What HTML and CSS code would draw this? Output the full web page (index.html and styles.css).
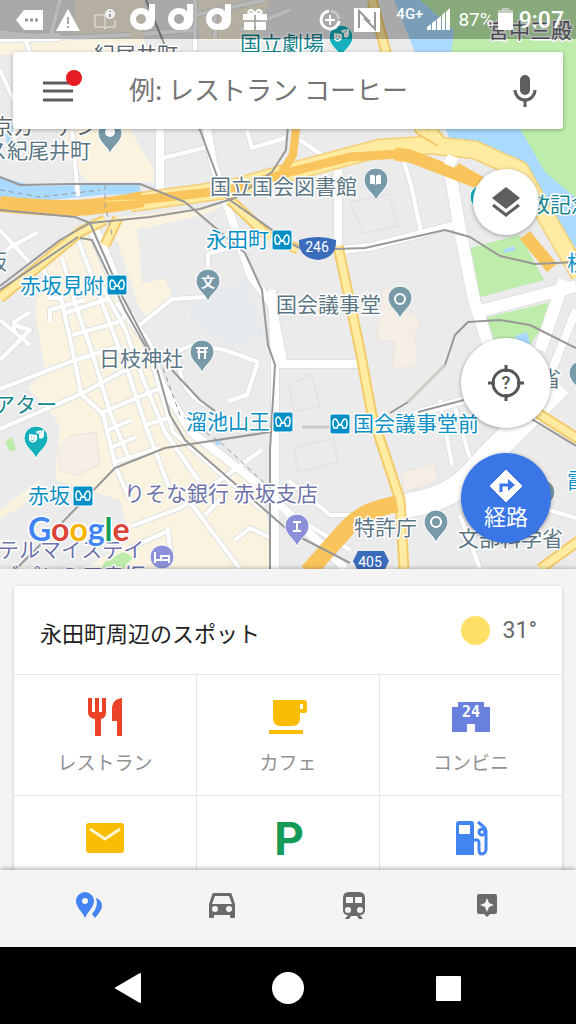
FILE: index.html
```html
<!DOCTYPE html>
<html lang="ja">
<head>
    <meta charset="UTF-8">
    <meta name="viewport" content="width=device-width, initial-scale=1.0">
    <title>永田町周辺のスポット</title>
    <link rel="stylesheet" href="styles.css">
</head>
<body>
<div class="screen">

    <main class="map">
        <svg class="map-canvas" viewBox="0 0 576 569" preserveAspectRatio="xMidYMin slice">
            <defs>
                <path id="pin" d="M0 18C-2 10-12 6-12-3A12 12 0 1 1 12-3C12 6 2 10 0 18z"/>
                <g id="metro">
                    <rect x="-10" y="-10" width="20" height="20" rx="2" fill="#0090c5" stroke="#fff" stroke-width="1"/>
                    <path d="M-2 4H-6C-8 0-7-5-5-5-2-5-2 1 0 1S2-5 5-5C7-5 8 0 6 4H2M-2 4Q-4 1 0 1 4 1 2 4" fill="none" stroke="#fff" stroke-width="1.5"/>
                </g>
                <g id="masks" fill="#fff">
                    <path d="M-7-4l8 1v4c-1 5-8 4-8 0z"/>
                    <path d="M1-7l7-1v5c0 4-3 4-5 3v-4l-3-1z"/>
                    <path d="M-5-1h1M-2 0h1M3-5h1M5-6h1M-5 2q2 1 3 0" stroke="#17a9b5"/>
                </g>
                <path id="narrow" d="M24 36L44 92M72 130L78 196M163 158L212 146M208 268V254L242 244M140 325L172 299 206 297M0 230L30 263M6 250L38 232M0 360L30 330 14 325M14 330V322L30 312M48 298L61 298 75 362 81 394 103 414 116 468M42 268L62 300M62 258L79 315 92 352 110 412 129 459M78 240L101 300 127 369 147 429 170 490M101 285L125 329 143 379 165 432 205 490M110 285L138 325 154 369 173 432 262 510M50 322V310L84 300M66 313L110 298M72 335L119 322M0 389L75 360 118 347M0 429L81 394 127 369M103 412L158 389M108 430L131 420M112 447L136 437M115 462L160 448M122 318L134 314M128 365L152 358M145 425L168 418M30 345L0 320M116 468L130 500M132 526L180 508 192 500 262 450M190 502L240 569M205 515L228 492M235 540L250 528 275 540M167 527L172 560M130 548L170 530M182 380L176 352 192 345 225 350 258 362M258 362L247 395 228 401M182 380Q190 398 205 405M288 480L330 515 355 515M300 520L350 550M440 400L452 465M455 408L470 458M515 500L576 518M480 569L460 515M404 162L411 185 421 232M300 140L326 158 290 170M0 70L18 110 13 150M247 130L252 148 285 138M195 0V50M60 0L50 38 0 32M50 38L130 35M143 34L195 30M195 15L265 0M240 30L290 10M215 10V38"/>
                <path id="medium" d="M160 122V190M206 122L213 163 233 223 250 275 272 305 283 360M272 290L275 364V569M278 364H366M338 170V246M340 250L370 247 455 225M118 302L147 342 162 385 191 432 257 483 323 546 345 569M415 414L465 400M0 38L60 37M540 400L576 310M30 80L95 85"/>
                <path id="wide" d="M448 160L460 230 474 300 490 350M480 311L576 286M564 280L540 350M92 226L122 298"/>
                <path id="boulevard" d="M405 506C470 496 475 465 500 445L560 385"/>
                <path id="yellow" d="M372 0L386 52 420 130 440 142M338 246L360 350 372 415 400 500 404 569M0 298L80 232 105 220M230 200L270 238M288 245L298 249M530 408L580 440M540 569L580 540M425 120L440 140M105 245L118 218"/>
            </defs>

            <rect width="576" height="569" fill="#ebebec"/>

            <!-- built-up areas -->
            <g fill="#faf3df">
                <path d="M0 40H130L134 55H0zM70 125H128L154 170V182H88L60 150z"/>
                <path d="M45 270L90 230 125 310 150 350 182 420 260 480 275 569H85L130 540 120 500 55 480 60 425 40 400 28 388 45 372 35 310z"/>
                <path d="M112 226l25-2 5 60 22-6 8 18-22 26-12-18z"/>
                <path d="M110 218L225 205 200 216 125 232z"/>
                <path d="M0 510L40 480 30 500 0 520z"/>
                <path d="M195 0h75l-15 40h-55zM75 0h70v45H75z"/>
            </g>
            <path d="M185 300L248 280 265 340 225 345 190 320z" fill="#e7eaed"/>
            <g fill="none" stroke="#dfdfe0">
                <path d="M350 202l39-8 9 32-35 7zM289 386l22-12 9 32-26 6zM294 448l39-10 5 24-40 10zM345 150l48-2"/>
            </g>
            <g fill="#f4eee7" stroke="#eae4de">
                <path d="M383 288l22 2 2 23 12 3 1 15-6 4 5 30-27 5 3-28-18-2 2-20z"/>
                <path d="M402 472l33-8 3 17-34 12zM58 448l12-12 26-4 4 32-22 12-18-6z"/>
            </g>

            <!-- parks and water -->
            <path d="M413 0H576V260L520 190 475 110z" fill="#bdecab"/>
            <path d="M394 0H420L454 30 451 55 522 132 545 172 576 198V260L545 230 505 175 450 140 414 50z" fill="#aadaff"/>
            <path d="M470 248L520 235 544 280 480 297z" fill="#bdecab"/>
            <path d="M484 318L560 300 520 360 490 350zM5 442l7-5 4 12-6 3zM105 562l18-10 10 5-10 12h-22z" fill="#bdecab"/>
            <path d="M503 250l10-4 3 4-12 3zM515 336l12-4 3 12-12 2zM215 442a3 3 0 1 0 6 0 3 3 0 1 0-6 0M5 128l8-3 5 20-10 6z" fill="#aadaff"/>
            <path d="M0 177L35 186 140 184V194L100 195 40 201 0 198z" fill="#aadaff"/>

            <!-- streets, casing first -->
            <g class="casing">
                <use href="#narrow" stroke-width="6"/>
                <use href="#medium" stroke-width="10"/>
                <use href="#wide" stroke-width="14"/>
                <use href="#boulevard" stroke-width="26"/>
            </g>
            <g class="street">
                <use href="#narrow" stroke-width="4"/>
                <use href="#medium" stroke-width="8"/>
                <use href="#wide" stroke-width="12"/>
                <use href="#boulevard" stroke-width="24"/>
            </g>

            <!-- highways -->
            <g class="highway">
                <path d="M130 203L230 189 290 172 380 148 430 145 475 150 520 170 545 215 580 275" stroke="#f5cf77" stroke-width="19"/>
                <path d="M130 203L230 189 290 172 380 148 430 145 475 150 520 170 545 215 580 275" stroke="#ffeba1" stroke-width="16"/>
                <use href="#yellow" stroke="#f3cb6c" stroke-width="11"/>
                <use href="#yellow" stroke="#ffeba1" stroke-width="7"/>
                <path d="M0 204Q60 210 90 207T143 199" stroke="#fac45c" stroke-width="16"/>
                <path d="M130 201L230 190 290 172 350 157 400 154" stroke="#fac45c" stroke-width="9"/>
                <path d="M395 154L410 156 475 181M525 235L552 268" stroke="#fac45c" stroke-width="13"/>
                <path d="M455 169L480 183" stroke="#fac45c" stroke-width="14"/>
                <path d="M446 159L456 163" stroke="#fff" stroke-width="10"/>
                <path d="M282 172L293 155 297 120" stroke="#fac45c" stroke-width="8"/>
                <path d="M308 572L348 527C360 514 376 508 397 504" stroke="#fac45c" stroke-width="17"/>
                <path d="M106 201L135 200" stroke="#ffe58c" stroke-width="1"/>
            </g>

            <!-- railways -->
            <g class="rail">
                <path d="M0 177L20 185 70 184 140 184 185 202 245 253 262 290 268 345 275 365 270 450V569"/>
                <path d="M0 210L75 217 90 223 150 217 200 209 235 198 272 172 286 150 288 125"/>
                <path d="M146 0L200 130 224 195 230 200 275 232"/>
                <path d="M90 223L120 292 150 350M80 238L92 240 125 310 156 365 170 415 185 440 290 532 350 563"/>
                <path d="M0 290L78 237M0 286L60 240 90 223"/>
                <path d="M0 585L50 535 115 468 165 448 270 432"/>
                <path d="M172 370L200 400 215 411"/>
                <path d="M288 242L300 248 335 249 365 248 445 230 470 237 500 256 535 264 576 262"/>
                <path d="M390 413L408 402M445 365L455 335 468 322 500 320 530 325 576 348M418 412L464 400M530 418L576 446"/>
                <path d="M408 402L445 365M302 427H340" stroke="#d0ccc5" stroke-width="3"/>
                <path d="M105 185V205L112 235M0 190L40 197 100 190" stroke-width="1" stroke-dasharray="5 4"/>
                <path d="M160 360L180 415 220 442 272 490" stroke-width="1" stroke-dasharray="5 4"/>
            </g>

            <!-- place pins -->
            <g stroke="#fff" stroke-width="1">
                <g fill="#7799a8">
                    <use href="#pin" x="110" y="136"/>
                    <use href="#pin" x="208" y="284"/>
                    <use href="#pin" x="376" y="183"/>
                    <use href="#pin" x="400" y="301"/>
                    <use href="#pin" x="202" y="355"/>
                    <use href="#pin" x="436" y="525"/>
                    <use href="#pin" x="581" y="376"/>
                    <use href="#pin" x="543" y="495"/>
                </g>
                <g fill="#16b0bd">
                    <use href="#pin" x="36" y="441"/>
                    <use href="#pin" x="341" y="40"/>
                    <use href="#pin" x="482" y="200"/>
                </g>
                <g fill="#8c90d8">
                    <use href="#pin" x="297" y="529"/>
                    <circle cx="162" cy="557" r="12"/>
                </g>
            </g>
            <use href="#masks" x="36" y="438"/>
            <use href="#masks" x="341" y="37"/>
            <circle cx="110" cy="132" r="5" fill="#fff"/>
            <g fill="none" stroke="#fff" stroke-width="2">
                <circle cx="400" cy="299" r="5"/>
                <circle cx="436" cy="522" r="5"/>
                <path d="M196 348h12M197 352h10M199 348v11M205 348v11"/>
                <path d="M155 552v11M155 560h14v3M169 560v-4h-8v4"/>
                <path d="M293 522h8M293 531h8M297 522v9"/>
            </g>
            <path d="M370 175q3-1 5 1v9q-2-2-5-1zM381 175q-3-1-5 1v9q2-2 5-1z" fill="#fff"/>

            <!-- station marks -->
            <use href="#metro" x="282" y="240"/>
            <use href="#metro" x="117" y="285"/>
            <use href="#metro" x="283" y="422"/>
            <use href="#metro" x="340" y="424"/>
            <use href="#metro" x="83" y="496"/>

            <!-- road numbers -->
            <path d="M299 240q19-6 37 0 1 18-18 20-20-2-19-20z" fill="#3a6cbc"/>
            <path d="M358 551h26l5 10-5 10h-26l-5-10z" fill="#3a6cbc"/>
            <text class="route-no" x="317" y="252">246</text>
            <text class="route-no" x="370" y="567">405</text>

            <!-- labels -->
            <g class="label">
                <text x="94" y="62" class="dark">紀尾井町</text>
                <text x="240" y="51" class="culture">国立劇場</text>
                <text x="488" y="38" class="dark">宮中三殿</text>
                <text x="-8" y="134" class="dark">京ガーデン</text>
                <text x="-14" y="158">ス紀尾井町</text>
                <text x="210" y="194">国立国会図書館</text>
                <text x="206" y="247" class="station">永田町</text>
                <text x="20" y="293" class="station">赤坂見附</text>
                <text x="276" y="312">国会議事堂</text>
                <text x="99" y="366">日枝神社</text>
                <text x="186" y="429" class="station">溜池山王</text>
                <text x="353" y="431" class="station">国会議事堂前</text>
                <text x="-6" y="412" class="culture">アター</text>
                <text x="28" y="503" class="station">赤坂</text>
                <text x="124" y="501" class="shop">りそな銀行 赤坂支店</text>
                <text x="354" y="535">特許庁</text>
                <text x="458" y="546">文部科学省</text>
                <text x="540" y="386">省</text>
                <text x="529" y="212" class="culture">敦記念</text>
                <text x="567" y="270" class="station">桜</text>
                <text x="567" y="488" class="station">霞</text>
                <text x="-14" y="269">板</text>
                <text x="-2" y="557" class="shop">テルマイステイ</text>
                <text x="-2" y="583" class="shop">ズプレミア赤坂</text>
                <text x="208" y="287" class="pin-text">文</text>
            </g>
            <text class="google" x="28" y="541"><tspan fill="#4285f4">G</tspan><tspan fill="#db4437">o</tspan><tspan fill="#f4b400">o</tspan><tspan fill="#4285f4">g</tspan><tspan fill="#0f9d58">l</tspan><tspan fill="#db4437">e</tspan></text>
        </svg>

        <header class="status-bar">
            <div class="status-left">
                <svg width="27" height="22" viewBox="0 0 27 22"><path d="M8 1h19v20H8L0 11z" fill="#fff"/><path d="M9 11h3M14 11h3M19 11h3" stroke="#999" stroke-width="3"/></svg>
                <svg width="24" height="22" viewBox="0 0 24 22"><path d="M12 0l12 22H0z" fill="#fff"/><path d="M12 8v7M12 17v2" stroke="#aaa" stroke-width="2"/></svg>
                <svg width="23" height="22" viewBox="0 0 23 22"><path d="M12 6H2v12h8l2 2 2-2h8v-7M12 6v13" fill="none" stroke="#e8e8e8" stroke-width="1"/><circle cx="17" cy="5" r="5" fill="#eee"/><path d="M17 2v1M17 5v3" stroke="#999" stroke-width="2"/></svg>
                <svg class="carrier" width="27" height="28" viewBox="0 0 27 28"><circle cx="12" cy="16" r="8"/><path d="M23 1v15q0 8-8 8"/></svg>
                <svg class="carrier" width="27" height="28" viewBox="0 0 27 28"><circle cx="12" cy="16" r="8"/><path d="M23 1v15q0 8-8 8"/></svg>
                <svg class="carrier" width="27" height="28" viewBox="0 0 27 28"><circle cx="12" cy="16" r="8"/><path d="M23 1v15q0 8-8 8"/></svg>
                <svg width="24" height="22" viewBox="0 0 24 22"><path d="M0 5h11v6H0zM13 5h11v6H13zM1 13h10v8H1zM13 13h10v8H13z" fill="#fff"/><path d="M12 5Q9-1 6 2t6 3Q15-1 18 2t-6 3" fill="none" stroke="#fff" stroke-width="2"/></svg>
            </div>
            <div class="status-right">
                <svg width="24" height="24" viewBox="0 0 24 24" fill="none" stroke="#fff" stroke-width="3"><path d="M11 3a9 9 0 1 0 10 10"/><path d="M13 3a9 9 0 0 1 8 8" stroke="#c8c8c8"/><path d="M12 7v10M7 12h10" stroke-width="2"/></svg>
                <svg class="nfc" width="26" height="26" viewBox="0 0 26 26"><path d="M0 1h26v24H0z" fill="#fff"/><path d="M5 21V4l11 11M21 5v17L10 11" fill="none" stroke="#999" stroke-width="2"/></svg>
                <span class="network">4G+</span>
                <svg width="23" height="23" viewBox="0 0 23 23"><path d="M0 22v-3l4-3v6zM5 22v-7l4-3v10zM10 22V11l4-3v14zM15 22V7l3-3v18zM19 22V4l4-4v22z" fill="#fff"/></svg>
                <span class="charge">87%</span>
                <svg class="battery" width="15" height="22" viewBox="0 0 15 22"><path d="M0 5h15v16a1 1 0 0 1-1 1H1a1 1 0 0 1-1-1z" fill="#fff"/><path d="M4 0h7v2h4v3H0V2h4z" fill="#c4cdc1"/></svg>
                <span class="clock">9:07</span>
            </div>
        </header>

        <form class="search">
            <button class="menu-btn" type="button" aria-label="メニュー">
                <svg width="30" height="22" viewBox="0 0 30 22"><path d="M0 3h30M0 11h30M0 20h30" stroke="#5b5b5b" stroke-width="3"/></svg>
                <span class="badge"></span>
            </button>
            <input type="text" aria-label="検索" placeholder="例: レストラン コーヒー">
            <button class="mic-btn" type="button" aria-label="音声検索">
                <svg width="24" height="32" viewBox="0 0 24 32"><rect x="7" y="0" width="10" height="20" rx="5" fill="#5e5e5e"/><path d="M2 15a10 10 0 0 0 20 0M12 25v7" fill="none" stroke="#5e5e5e" stroke-width="3"/></svg>
            </button>
        </form>

        <div class="map-actions">
            <button class="fab small" type="button" aria-label="レイヤ">
                <svg width="30" height="32" viewBox="0 0 30 32"><path d="M15 1l14 11-14 11L1 12z" fill="#5f5f5f"/><path d="M2 19l13 10 13-10" fill="none" stroke="#5f5f5f" stroke-width="3"/></svg>
            </button>
            <button class="fab" type="button" aria-label="現在地">
                <svg width="36" height="36" viewBox="0 0 36 36"><circle cx="18" cy="18" r="13" fill="none" stroke="#555" stroke-width="3"/><path d="M18 0v7M18 29v7M0 18h7M29 18h7" stroke="#555" stroke-width="3"/><text x="18" y="24" text-anchor="middle" class="unknown">?</text></svg>
            </button>
            <button class="fab route" type="button">
                <svg width="32" height="32" viewBox="0 0 32 32"><path d="M16 0L32 16 16 32 0 16z" fill="#fff" stroke="#fff" stroke-linejoin="round"/><path d="M11 22v-7h9" fill="none" stroke="#3a76e6" stroke-width="3"/><path d="M18 9l7 6-7 6z" fill="#3a76e6"/></svg>
                <span>経路</span>
            </button>
        </div>
    </main>

    <section class="sheet">
        <div class="card">
            <div class="card-head">
                <h1>永田町周辺のスポット</h1>
                <div class="weather"><span class="sun"></span>31°</div>
            </div>
            <div class="spots">
                <button class="spot" type="button">
                    <svg width="38" height="38" viewBox="0 0 38 38" fill="#ea4327"><path d="M2 0h4v14h3V0h4v14h3V0h4v14q0 6-5 7v17H9V21q-7-1-7-7zM36 0v38h-5V23h-5V9q1-8 10-9z"/></svg>
                    <span>レストラン</span>
                </button>
                <button class="spot" type="button">
                    <svg width="38" height="38" viewBox="0 0 38 38" fill="#fbbc04"><path fill-rule="evenodd" d="M4 2h31q3 0 3 3v7q0 3-3 3h-4v5q0 8-8 8H12q-8 0-8-8zM31 6v5h3V6z"/><path d="M0 32h34v4H0z"/></svg>
                    <span>カフェ</span>
                </button>
                <button class="spot" type="button">
                    <svg width="38" height="38" viewBox="0 0 38 38"><path d="M6 4h26v5h6v25H23v-8h-8v8H0V9h6z" fill="#6a80df"/><text x="19" y="19" text-anchor="middle" class="hours">24</text></svg>
                    <span>コンビニ</span>
                </button>
                <button class="spot" type="button" aria-label="郵便局">
                    <svg width="38" height="38" viewBox="0 0 38 38"><rect y="4" width="38" height="30" rx="3" fill="#fbbc04"/><path d="M4 10l15 10 15-10" fill="none" stroke="#fff6cf" stroke-width="3"/></svg>
                </button>
                <button class="spot" type="button" aria-label="駐車場">
                    <svg width="38" height="38" viewBox="0 0 38 38"><text x="20" y="36" text-anchor="middle" class="parking">P</text></svg>
                </button>
                <button class="spot" type="button" aria-label="ガソリンスタンド">
                    <svg width="38" height="38" viewBox="0 0 38 38"><path fill-rule="evenodd" d="M7 2h12q3 0 3 3v31H4V5q0-3 3-3zM7 6v9h11V6z" fill="#4384f3"/><path d="M22 21h3q2 0 2 3v7q0 4 3 4t4-4V12q0-2-2-4l-6-5" fill="none" stroke="#4384f3" stroke-width="3"/><circle cx="30" cy="13" r="3" fill="#fff" stroke="#4384f3" stroke-width="3"/></svg>
                </button>
            </div>
        </div>
    </section>

    <nav class="tabs">
        <a href="#explore" aria-label="周辺のスポット">
            <svg width="30" height="30" viewBox="0 0 30 30" fill="#4384f3"><path fill-rule="evenodd" d="M11 2a9 9 0 0 1 9 9c0 6-6 10-9 17C8 21 2 17 2 11a9 9 0 0 1 9-9zm0 6a3 3 0 1 0 0 6 3 3 0 0 0 0-6z"/><path d="M22 8q6 2 6 8 0 4-7 12l-3-4q7-8 4-16z"/></svg>
        </a>
        <a href="#drive" aria-label="車">
            <svg width="30" height="30" viewBox="0 0 30 30" fill="#6a6a6a"><path fill-rule="evenodd" d="M7 3h16q2 0 2 2l3 9v13q0 1-1 1h-3q-1 0-1-1v-2H7v2q0 1-1 1H3q-1 0-1-1V14l3-9q0-2 2-2zM8 6l-3 8h20l-3-8zM8 16a3 3 0 1 0 0 6 3 3 0 0 0 0-6zm14 0a3 3 0 1 0 0 6 3 3 0 0 0 0-6z"/></svg>
        </a>
        <a href="#transit" aria-label="交通機関">
            <svg width="30" height="30" viewBox="0 0 30 30" fill="#6a6a6a"><path fill-rule="evenodd" d="M10 2h10q6 0 6 6v12q0 5-5 5l3 4h-4l-2-3h-6l-2 3H6l3-4q-5 0-5-5V8q0-6 6-6zM7 7v6h7V7zm9 0v6h7V7zM9 17a3 3 0 1 0 0 6 3 3 0 0 0 0-6zm12 0a3 3 0 1 0 0 6 3 3 0 0 0 0-6z"/></svg>
        </a>
        <a href="#contribute" aria-label="おすすめ">
            <svg width="30" height="30" viewBox="0 0 30 30" fill="#6a6a6a"><path fill-rule="evenodd" d="M7 4h16q2 0 2 2v16q0 2-2 2h-5l-3 3-3-3H7q-2 0-2-2V6q0-2 2-2zm8 4l-2 5-5 2 5 2 2 5 2-5 5-2-5-2z"/></svg>
        </a>
    </nav>

    <footer class="system-nav">
        <button type="button" aria-label="戻る"><svg width="32" height="32" viewBox="0 0 32 32"><path d="M28 2v28L4 16z" fill="#fff" stroke="#fff" stroke-width="2" stroke-linejoin="round"/></svg></button>
        <button type="button" aria-label="ホーム"><svg width="32" height="32" viewBox="0 0 32 32"><circle cx="16" cy="16" r="16" fill="#fff"/></svg></button>
        <button type="button" aria-label="アプリ履歴"><svg width="32" height="32" viewBox="0 0 32 32"><rect x="4" y="4" width="25" height="25" rx="1" fill="#fff"/></svg></button>
    </footer>

</div>
</body>
</html>
```

FILE: styles.css
```css
* {
    box-sizing: border-box;
}
body {
    margin: 0;
    font-family: Roboto, "Noto Sans CJK JP", sans-serif;
    color: #212121;
    background: #f4f4f4;
}
button {
    border: none;
    padding: 0;
    background: none;
    font: inherit;
    color: inherit;
    cursor: pointer;
}
svg {
    display: block;
    flex: none;
}
.screen {
    display: flex;
    flex-direction: column;
    height: 100vh;
}

/* map */
.map {
    position: relative;
    flex: 1;
    min-height: 0;
    overflow: hidden;
    background: #ebebec;
}
.map-canvas {
    position: absolute;
    inset: 0;
    width: 100%;
    height: 100%;
}
.casing,
.street,
.highway,
.rail {
    fill: none;
    stroke-linejoin: round;
}
.casing {
    stroke: #dfe0e2;
}
.street {
    stroke: #fff;
}
.rail {
    stroke: #989898;
    stroke-width: 2;
}
.label {
    font-family: "Noto Sans CJK JP", sans-serif;
    font-size: 21px;
    fill: #5b7684;
    stroke: #fff;
    stroke-width: 3px;
    stroke-linejoin: round;
    paint-order: stroke;
}
.label .dark {
    fill: #5d666b;
}
.label .station {
    fill: #0b8fc4;
}
.label .culture {
    fill: #15868e;
}
.label .shop {
    fill: #6e73a8;
}
.label .pin-text {
    font-size: 14px;
    font-weight: 700;
    text-anchor: middle;
    fill: #fff;
    stroke: none;
}
.route-no {
    font-size: 14px;
    text-anchor: middle;
    fill: #fff;
}
.google {
    font-family: Lato, sans-serif;
    font-size: 32px;
    font-weight: 700;
    stroke: #fff;
    stroke-width: 3px;
    paint-order: stroke;
}

/* status bar */
.status-bar {
    position: relative;
    display: flex;
    justify-content: space-between;
    align-items: center;
    height: 39px;
    padding: 0 12px 0 16px;
    background: rgba(0, 0, 0, 0.28);
    color: #fff;
}
.status-left,
.status-right {
    display: flex;
    align-items: center;
}
.status-left {
    gap: 13px;
}
.status-left .carrier {
    margin-right: -2px;
    margin-bottom: 6px;
    fill: none;
    stroke: #fff;
    stroke-width: 6;
}
.status-right {
    gap: 8px;
}
.nfc {
    margin: 0 8px 0 4px;
}
.network {
    font-size: 15px;
    font-weight: 500;
    line-height: 16px;
    margin: 0 -4px 12px 0;
}
.charge {
    font-size: 19px;
    margin-right: -4px;
}
.battery {
    margin-bottom: 2px;
}
.clock {
    font-size: 23px;
    font-weight: 500;
    margin: 2px 0 0 -2px;
}

/* search */
.search {
    position: relative;
    display: flex;
    align-items: center;
    height: 77px;
    margin: 13px 13px 0;
    padding: 0 26px 0 30px;
    background: #fff;
    border-radius: 3px;
    box-shadow: 0 1px 4px rgba(0, 0, 0, 0.3);
}
.menu-btn {
    position: relative;
}
.badge {
    position: absolute;
    top: -10px;
    right: -9px;
    width: 16px;
    height: 16px;
    border-radius: 50%;
    background: #e51c23;
}
.search input {
    flex: 1;
    min-width: 0;
    margin: 0 16px 4px 56px;
    padding: 0;
    border: none;
    outline: none;
    background: none;
    font-family: "Noto Sans CJK JP", sans-serif;
    font-size: 26px;
    color: #333;
}
.search input::placeholder {
    color: #757575;
    opacity: 1;
}

/* floating buttons */
.map-actions {
    position: relative;
    display: flex;
    flex-direction: column;
    align-items: center;
    width: 90px;
    margin: 40px 25px 0 auto;
}
.fab {
    display: flex;
    flex-direction: column;
    align-items: center;
    justify-content: center;
    width: 90px;
    height: 90px;
    border-radius: 50%;
    background: #fff;
    box-shadow: 0 1px 4px rgba(0, 0, 0, 0.35);
}
.fab.small {
    width: 66px;
    height: 66px;
    margin-bottom: 103px;
}
.fab.route {
    margin-top: 25px;
    padding-top: 8px;
    background: #3a76e6;
    color: #fff;
    font-size: 22px;
    line-height: 32px;
}
.unknown {
    font-size: 18px;
    font-weight: 500;
    fill: #555;
}

/* nearby spots */
.sheet {
    flex: 0 0 301px;
    overflow: hidden;
    padding: 17px 14px 0;
    background: #f4f4f4;
    box-shadow: 0 -1px 4px rgba(0, 0, 0, 0.25);
    position: relative;
}
.card {
    background: #fff;
    border-radius: 3px;
    box-shadow: 0 1px 3px rgba(0, 0, 0, 0.25);
}
.card-head {
    display: flex;
    align-items: center;
    justify-content: space-between;
    height: 88px;
    padding: 0 25px 0 26px;
}
.card-head h1 {
    margin: 4px 0 0;
    font-size: 22px;
    font-weight: 400;
}
.weather {
    display: flex;
    align-items: center;
    gap: 13px;
    font-size: 23px;
    color: #6b6b6b;
}
.sun {
    width: 29px;
    height: 29px;
    border-radius: 50%;
    background: #ffdf66;
}
.spots {
    display: grid;
    grid-template-columns: repeat(3, 1fr);
    gap: 1px;
    padding-top: 1px;
    background: #e6e6e6;
}
.spot {
    display: flex;
    flex-direction: column;
    align-items: center;
    gap: 14px;
    height: 120px;
    padding-top: 23px;
    background: #fff;
    font-size: 19px;
    line-height: 28px;
    color: #929292;
}
.hours {
    font-family: "DejaVu Sans Mono", monospace;
    font-size: 15px;
    font-weight: 700;
    fill: #fff;
}
.parking {
    font-size: 46px;
    font-weight: 700;
    fill: #159b57;
}

/* tabs */
.tabs {
    position: relative;
    display: grid;
    grid-template-columns: repeat(4, 1fr);
    justify-items: center;
    height: 77px;
    padding: 20px 23px 0;
    background: #f4f4f4;
    box-shadow: 0 -1px 5px rgba(0, 0, 0, 0.35);
}

/* system buttons */
.system-nav {
    position: relative;
    display: grid;
    grid-template-columns: repeat(3, 1fr);
    place-items: center;
    height: 77px;
    padding: 4px 48px 0;
    background: #000;
}
```
